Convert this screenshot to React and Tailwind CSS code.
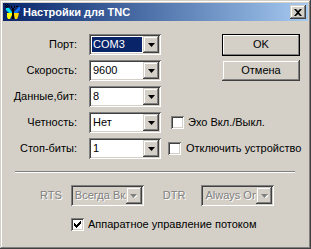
import React from 'react';

// classic 3d edges
const raised = 'shadow-[inset_-1px_-1px_0_#404040,inset_1px_1px_0_#d4d0c8,inset_-2px_-2px_0_#808080,inset_2px_2px_0_#ffffff]';
const sunken = 'shadow-[inset_1px_1px_0_#808080,inset_-1px_-1px_0_#ffffff,inset_2px_2px_0_#404040,inset_-2px_-2px_0_#d4d0c8]';

const Arrow = ({ disabled }) => (
  <svg width="7" height="4" viewBox="0 0 7 4" className="block">
    {disabled && <path d="M1 1h7L4.5 4.5z" fill="#ffffff" />}
    <path d="M0 0h7L3.5 4z" fill={disabled ? '#808080' : '#000000'} />
  </svg>
);

const Combo = ({ value, selected, disabled, className = '' }) => (
  <div className={`flex h-[21px] p-[2px] ${disabled ? 'bg-[#d4d0c8]' : 'bg-white'} ${sunken} ${className}`}>
    <div className="flex-1 overflow-hidden p-[1px]">
      <div
        className={`h-full flex items-center pl-[1px] whitespace-nowrap ${
          selected ? 'bg-[#0a246a] text-white' : ''
        } ${disabled ? 'text-[#808080] [text-shadow:1px_1px_0_#ffffff]' : ''}`}
      >
        {value}
      </div>
    </div>
    <div className={`w-[16px] h-full flex items-center justify-center bg-[#d4d0c8] ${raised}`}>
      <Arrow disabled={disabled} />
    </div>
  </div>
);

const Check = ({ checked }) => (
  <div className={`w-[13px] h-[13px] shrink-0 bg-white flex items-center justify-center ${sunken}`}>
    {checked && (
      <svg width="7" height="7" viewBox="0 0 7 7" className="block">
        <path d="M0 2h1v1h1v1h1V3h1V2h1V1h1V0h1v3H6v1H5v1H4v1H3v1H2V6H1V5H0z" fill="#000000" />
      </svg>
    )}
  </div>
);

const Butterfly = () => (
  <svg width="16" height="16" viewBox="0 0 16 16" className="block">
    <rect x="0" y="0" width="1" height="1" fill="#000" />
    <rect x="2" y="0" width="1" height="1" fill="#000" />
    <rect x="1" y="1" width="1" height="1" fill="#000" />
    <rect x="3" y="1" width="1" height="1" fill="#000" />
    <rect x="0" y="2" width="1" height="1" fill="#000" />
    <rect x="2" y="2" width="1" height="1" fill="#000" />
    <rect x="4" y="2" width="1" height="1" fill="#000" />
    <rect x="1" y="3" width="1" height="1" fill="#000" />
    <rect x="11" y="2" width="2" height="1" fill="#000" />
    <path d="M1 4h3l3 4v1H4L1 6z" fill="#00e0ff" />
    <path d="M14 3h1v3l-3 3H9V8z" fill="#1070ff" />
    <path d="M2 9h5v2l-2 4H3L2 13z" fill="#ffff00" />
    <path d="M9 9h5l-1 4-1 2h-2l-1-4z" fill="#ffd800" />
    <rect x="7" y="4" width="2" height="11" fill="#000" />
    <rect x="6" y="2" width="1" height="2" fill="#000" />
    <rect x="9" y="2" width="1" height="2" fill="#000" />
  </svg>
);

const Row = ({ label, children }) => (
  <div className="flex items-center h-[21px]">
    <span className="w-[74px] text-right">{label}</span>
    {children}
  </div>
);

export default function App() {
  return (
    <div
      className="w-[311px] h-[249px] bg-[#d4d0c8] p-[3px] flex flex-col text-[11px] leading-none text-black shadow-[inset_-1px_-1px_0_#404040,inset_1px_1px_0_#d4d0c8,inset_-2px_-2px_0_#808080,inset_2px_2px_0_#ffffff] overflow-hidden"
      style={{ fontFamily: '"Liberation Sans", Arial, sans-serif' }}
    >
      {/* title bar */}
      <div className="h-[18px] shrink-0 flex items-center bg-gradient-to-r from-[#0a246a] to-[#a6caf0] pl-[2px] pr-[2px]">
        <Butterfly />
        <span className="ml-[2px] text-white font-bold text-[11px]">Настройки для TNC</span>
        <div className={`ml-auto w-[16px] h-[14px] bg-[#d4d0c8] flex items-center justify-center ${raised}`}>
          <svg width="8" height="7" viewBox="0 0 8 7" className="block">
            <path d="M0 0h2l2 2 2-2h2L5 3.5 8 7H6L4 5 2 7H0l3-3.5z" fill="#000" />
          </svg>
        </div>
      </div>

      <div className="flex flex-col pt-[13px] gap-[5px]">
        <Row label="Порт:">
          <Combo value="COM3" selected className="ml-[12px] w-[72px]" />
          <button className="ml-[61px] w-[78px] h-[22px] bg-[#d4d0c8] border border-black shadow-[inset_-1px_-1px_0_#808080,inset_1px_1px_0_#ffffff] flex items-center justify-center">
            OK
          </button>
        </Row>
        <Row label="Скорость:">
          <Combo value="9600" className="ml-[12px] w-[72px]" />
          <button className={`ml-[61px] w-[78px] h-[21px] bg-[#d4d0c8] flex items-center justify-center ${raised}`}>
            Отмена
          </button>
        </Row>
        <Row label="Данные,бит:">
          <Combo value="8" className="ml-[12px] w-[72px]" />
        </Row>
        <Row label="Четность:">
          <Combo value="Нет" className="ml-[12px] w-[72px]" />
          <div className="ml-[10px] flex items-center gap-[4px]">
            <Check />
            <span>Эхо Вкл./Выкл.</span>
          </div>
        </Row>
        <Row label="Стоп-биты:">
          <Combo value="1" className="ml-[12px] w-[72px]" />
          <div className="ml-[7px] flex items-center gap-[5px]">
            <Check />
            <span className="whitespace-nowrap">Отключить устройство</span>
          </div>
        </Row>
      </div>

      <div className="ml-[12px] w-[280px] mt-[12px] border-t border-b border-t-[#808080] border-b-white" />

      <div className="flex items-center h-[21px] mt-[12px] pl-[37px]">
        <span className="text-[#808080] [text-shadow:1px_1px_0_#ffffff]">RTS</span>
        <Combo value="Всегда Вкл." disabled className="ml-[9px] w-[73px]" />
        <span className="ml-[19px] text-[#808080] [text-shadow:1px_1px_0_#ffffff]">DTR</span>
        <Combo value="Always On" disabled className="ml-[16px] w-[73px]" />
      </div>

      <div className="flex items-center mt-[12px] pl-[68px] gap-[4px]">
        <Check checked />
        <span>Аппаратное управление потоком</span>
      </div>
    </div>
  );
}
